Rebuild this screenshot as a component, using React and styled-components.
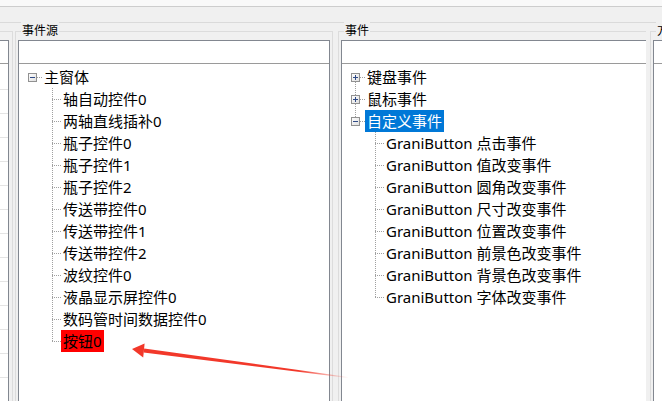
import React from "react";
import styled, { createGlobalStyle } from "styled-components";

const GlobalStyle = createGlobalStyle`
  body {
    margin: 0;
    background: #f0f0f0;
    font-family: "Noto Sans", "Noto Sans CJK SC", sans-serif;
  }
`;

const sources = [
  "轴自动控件0",
  "两轴直线插补0",
  "瓶子控件0",
  "瓶子控件1",
  "瓶子控件2",
  "传送带控件0",
  "传送带控件1",
  "传送带控件2",
  "波纹控件0",
  "液晶显示屏控件0",
  "数码管时间数据控件0",
];

const customEvents = [
  "点击事件",
  "值改变事件",
  "圆角改变事件",
  "尺寸改变事件",
  "位置改变事件",
  "前景色改变事件",
  "背景色改变事件",
  "字体改变事件",
];

const Expander = ({ open }) => (
  <ExpanderIcon width="9" height="9" viewBox="0 0 9 9">
    <defs>
      <linearGradient id="exp" x1="0" y1="0" x2="1" y2="1">
        <stop offset="0" stopColor="#ffffff" />
        <stop offset="1" stopColor="#dedede" />
      </linearGradient>
    </defs>
    <rect x="0.5" y="0.5" width="8" height="8" fill="url(#exp)" stroke="#919191" />
    <path d="M2 4.5h5" stroke="#2f4a86" />
    {!open && <path d="M4.5 2v5" stroke="#2f4a86" />}
  </ExpanderIcon>
);

const App = () => {
  return (
    <Page>
      <GlobalStyle />
      <TopStrip />
      <Panel>
        {/* left column, mostly scrolled off */}
        <Group $w={13} $noLeft $pr={3}>
          <Box $noLeft>
            <BoxHeader />
            <GridBody>
              {Array.from({ length: 14 }).map((_, i) => (
                <GridRow key={i} />
              ))}
            </GridBody>
          </Box>
        </Group>

        <Group $w={318} $ml={2}>
          <Legend>事件源</Legend>
          <Box>
            <BoxHeader />
            <Tree>
              <Row $pl={9}>
                <Expander open />
                <Stub $w={5} />
                <Label>主窗体</Label>
              </Row>
              <Children>
                {sources.map((s) => (
                  <Row key={s} $pl={33}>
                    <Stub $w={9} />
                    <Label>{s}</Label>
                  </Row>
                ))}
                <Row $pl={33}>
                  <Stub $w={9} />
                  <Label $sel="red">按钮0</Label>
                </Row>
              </Children>
            </Tree>
          </Box>
        </Group>

        <Group $w={308} $ml={5} $noRight $pr={0}>
          <Legend>事件</Legend>
          <Box $noRight>
            <BoxHeader />
            <Tree>
              <Row $pl={9} $link>
                <Expander />
                <Stub $w={5} />
                <Label>键盘事件</Label>
              </Row>
              <Row $pl={9} $link>
                <Expander />
                <Stub $w={5} />
                <Label>鼠标事件</Label>
              </Row>
              <Row $pl={9}>
                <Expander open />
                <Stub $w={5} />
                <Label $sel="blue">自定义事件</Label>
              </Row>
              <Children>
                {customEvents.map((e) => (
                  <Row key={e} $pl={33}>
                    <Stub $w={9} />
                    <Label>GraniButton {e}</Label>
                  </Row>
                ))}
              </Children>
            </Tree>
          </Box>
        </Group>

        <Group $w={120} $ml={4} $noRight $pr={0}>
          <Legend>方法</Legend>
          <Box $noRight>
            <BoxHeader />
          </Box>
        </Group>
      </Panel>

      <Arrow width="662" height="401" viewBox="0 0 662 401">
        <defs>
          <linearGradient
            id="shaft"
            gradientUnits="userSpaceOnUse"
            x1="144"
            y1="350"
            x2="349"
            y2="377"
          >
            <stop offset="0" stopColor="#f2382a" stopOpacity="1" />
            <stop offset="0.75" stopColor="#f2382a" stopOpacity="1" />
            <stop offset="1" stopColor="#f2382a" stopOpacity="0" />
          </linearGradient>
        </defs>
        <polygon
          points="144.2,348.5 348.1,376.9 347.9,378.1 143.6,352.5"
          fill="url(#shaft)"
        />
        <polygon points="132,349 144.6,343.4 143.2,357.6" fill="#f2382a" />
      </Arrow>
    </Page>
  );
};

export default App;

const Page = styled.div`
  position: relative;
  width: 662px;
  height: 401px;
  overflow: hidden;
  background: #f0f0f0;
`;

const TopStrip = styled.div`
  height: 6px;
  background: #f9f9f9;
  border-bottom: 1px solid #cdcdcd;
`;

const Panel = styled.div`
  display: flex;
  margin-top: 15px;
  padding-top: 8px;
  border-top: 1px solid #dadada;
  height: 380px;
`;

const Group = styled.div`
  position: relative;
  flex: none;
  box-sizing: border-box;
  width: ${(p) => p.$w}px;
  margin-left: ${(p) => p.$ml || 0}px;
  padding: 8px ${(p) => (p.$pr !== undefined ? p.$pr : 2)}px 0
    ${(p) => (p.$noLeft ? 0 : 2)}px;
  border-top: 1px solid #dcdcdc;
  border-left: ${(p) => (p.$noLeft ? "none" : "1px solid #dcdcdc")};
  border-right: ${(p) => (p.$noRight ? "none" : "1px solid #dcdcdc")};
`;

const Legend = styled.div`
  position: absolute;
  top: -10px;
  left: 5px;
  padding: 0 1px;
  background: #f0f0f0;
  font-family: "Noto Sans CJK SC", sans-serif;
  font-size: 12px;
  line-height: 15px;
  color: #000;
  white-space: nowrap;
`;

const Box = styled.div`
  box-sizing: border-box;
  height: 380px;
  background: #fff;
  border-top: 1px solid #828790;
  border-left: ${(p) => (p.$noLeft ? "none" : "1px solid #828790")};
  border-right: ${(p) => (p.$noRight ? "none" : "1px solid #828790")};
`;

const BoxHeader = styled.div`
  height: 22px;
  border-bottom: 1px solid #9a9a9a;
`;

const GridBody = styled.div`
  padding-top: 2px;
`;

const GridRow = styled.div`
  height: 23px;
  border-bottom: 1px solid #e4e4e4;
`;

const Tree = styled.div`
  padding-top: 2px;
  font-family: "Noto Sans", "Noto Sans CJK SC", sans-serif;
  font-size: 15px;
  color: #000;
`;

const Row = styled.div`
  position: relative;
  display: flex;
  align-items: center;
  height: 22px;
  padding-left: ${(p) => p.$pl}px;

  &::after {
    content: "";
    display: ${(p) => (p.$link ? "block" : "none")};
    position: absolute;
    left: 13px;
    top: 11px;
    height: 22px;
    border-left: 1px dotted #a0a0a0;
  }
`;

const ExpanderIcon = styled.svg`
  position: relative;
  z-index: 1;
  flex: none;
  display: block;
`;

const Stub = styled.span`
  flex: none;
  width: ${(p) => p.$w}px;
  height: 0;
  border-top: 1px dotted #a0a0a0;
`;

const Children = styled.div`
  position: relative;

  &::before {
    content: "";
    position: absolute;
    left: 33px;
    top: 0;
    bottom: 11px;
    border-left: 1px dotted #a0a0a0;
  }
`;

const Label = styled.span`
  height: 22px;
  line-height: 22px;
  padding: 0 2px;
  white-space: nowrap;
  background: ${(p) =>
    p.$sel === "blue" ? "#0078d7" : p.$sel === "red" ? "#ff0000" : "transparent"};
  color: ${(p) => (p.$sel === "blue" ? "#fff" : "#000")};
`;

const Arrow = styled.svg`
  position: absolute;
  left: 0;
  top: 0;
  pointer-events: none;
`;
